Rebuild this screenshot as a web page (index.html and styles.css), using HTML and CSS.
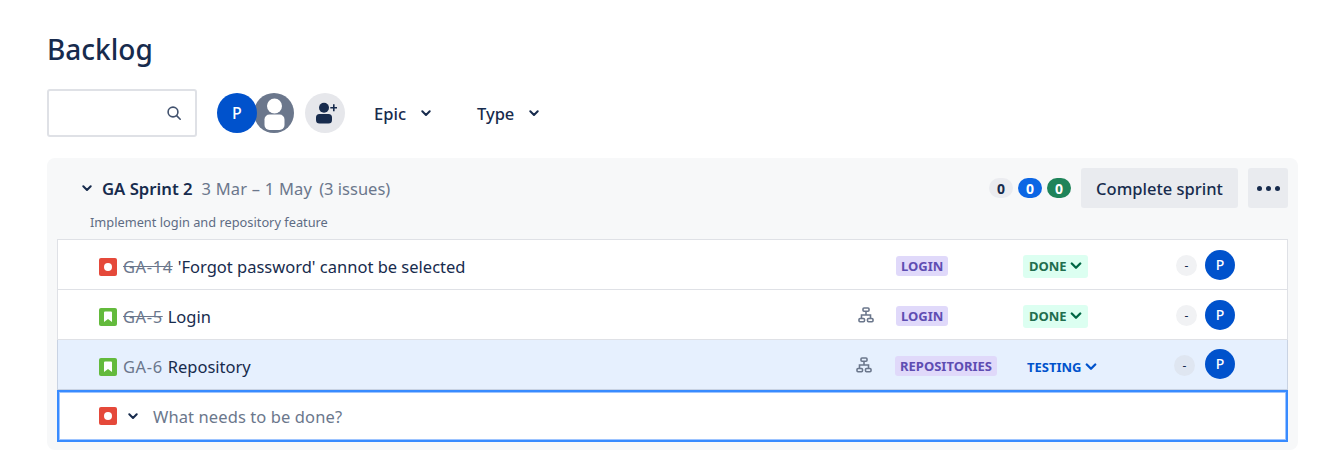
FILE: index.html
```html
<!DOCTYPE html>
<html lang="en">
<head>
    <meta charset="UTF-8">
    <meta name="viewport" content="width=device-width, initial-scale=1.0">
    <title>Backlog</title>
    <link rel="stylesheet" href="styles.css">
</head>
<body>
    <main class="page">
        <h1 class="title">Backlog</h1>
        <div class="toolbar">
            <div class="search">
                <svg class="search-icon" width="16" height="16" viewBox="0 0 16 16" fill="none" stroke="#42526e" stroke-width="1.6"><circle cx="7" cy="7" r="4.9"/><path d="M10.6 10.6 14.2 14.2" stroke-linecap="round"/></svg>
            </div>
            <div class="avatars">
                <span class="avatar avatar-lg">P</span>
                <span class="avatar-ghost">
                    <svg width="40" height="40" viewBox="0 0 40 40"><circle cx="20" cy="20" r="20" fill="#6b778c"/><circle cx="20.500" cy="13" r="7.500" fill="#fff"/><rect x="10.500" y="21.500" width="20" height="15.500" rx="5" fill="#fff"/></svg>
                </span>
            </div>
            <span class="add-people">
                <svg width="24" height="24" viewBox="0 0 24 24" fill="#172b4d"><circle cx="11" cy="6.800" r="5"/><path d="M3 16.500a3.500 3.500 0 0 1 3.500-3.500h9a3.500 3.500 0 0 1 3.500 3.500v2.500a3.500 3.500 0 0 1-3.500 3.500h-9A3.500 3.500 0 0 1 3 19z"/><path d="M20 3.300h1.600v2.700h2.400v1.600h-2.400v2.700H20V7.600h-2.700V6H20z"/></svg>
            </span>
            <button class="filter filter-epic">Epic <svg class="chev" width="10" height="7" viewBox="0 0 10 7"><path d="M1.300 1.300 5 5 8.700 1.300" fill="none" stroke="#172b4d" stroke-width="2" stroke-linecap="round" stroke-linejoin="round"/></svg></button>
            <button class="filter">Type <svg class="chev" width="10" height="7" viewBox="0 0 10 7"><path d="M1.300 1.300 5 5 8.700 1.300" fill="none" stroke="#172b4d" stroke-width="2" stroke-linecap="round" stroke-linejoin="round"/></svg></button>
        </div>

        <section class="sprint">
            <div class="sprint-head">
                <svg class="sprint-chev" width="10" height="7" viewBox="0 0 10 7"><path d="M1.300 1.300 5 5 8.700 1.300" fill="none" stroke="#172b4d" stroke-width="2" stroke-linecap="round" stroke-linejoin="round"/></svg>
                <h2 class="sprint-name">GA Sprint 2</h2>
                <span class="sprint-dates">3 Mar – 1 May</span>
                <span class="sprint-count">(3 issues)</span>
                <div class="sprint-actions">
                    <span class="count count-todo">0</span>
                    <span class="count count-progress">0</span>
                    <span class="count count-done">0</span>
                    <button class="btn btn-complete">Complete sprint</button>
                    <button class="btn btn-more" aria-label="More"><i></i><i></i><i></i></button>
                </div>
            </div>
            <p class="sprint-goal">Implement login and repository feature</p>

            <div class="issues">
                <div class="issue">
                    <svg class="type" width="18" height="18" viewBox="0 0 18 18"><rect width="18" height="18" rx="2" fill="#e5493a"/><circle cx="9" cy="9" r="4" fill="#fff"/></svg>
                    <span class="key key-done">GA-14</span>
                    <span class="summary">'Forgot password' cannot be selected</span>
                    <span class="tree"></span>
                    <span class="label-cell"><span class="label">LOGIN</span></span>
                    <span class="status-cell"><span class="status status-done">DONE <svg width="12" height="8" viewBox="0 0 10 7"><path d="M1.300 1.300 5 5 8.700 1.300" fill="none" stroke="#006644" stroke-width="2" stroke-linecap="round" stroke-linejoin="round"/></svg></span></span>
                    <span class="estimate">-</span>
                    <span class="avatar avatar-sm">P</span>
                </div>
                <div class="issue">
                    <svg class="type" width="18" height="18" viewBox="0 0 18 18"><rect width="18" height="18" rx="2" fill="#63ba3c"/><path d="M5 4.500a1 1 0 0 1 1-1h6a1 1 0 0 1 1 1v9.500l-4-3-4 3z" fill="#fff"/></svg>
                    <span class="key key-done">GA-5</span>
                    <span class="summary">Login</span>
                    <span class="tree">
                        <svg width="16" height="16" viewBox="0 0 16 16" fill="none" stroke="#6b778c" stroke-width="1.600"><rect x="5" y="1" width="6" height="3.200" rx="1"/><path d="M8 4.200V8M3.500 11.500V8h9v3.500"/><rect x="1" y="11.500" width="5.500" height="3.200" rx="1"/><rect x="9.500" y="11.500" width="5.500" height="3.200" rx="1"/></svg>
                    </span>
                    <span class="label-cell"><span class="label">LOGIN</span></span>
                    <span class="status-cell"><span class="status status-done">DONE <svg width="12" height="8" viewBox="0 0 10 7"><path d="M1.300 1.300 5 5 8.700 1.300" fill="none" stroke="#006644" stroke-width="2" stroke-linecap="round" stroke-linejoin="round"/></svg></span></span>
                    <span class="estimate">-</span>
                    <span class="avatar avatar-sm">P</span>
                </div>
                <div class="issue issue-selected">
                    <svg class="type" width="18" height="18" viewBox="0 0 18 18"><rect width="18" height="18" rx="2" fill="#63ba3c"/><path d="M5 4.500a1 1 0 0 1 1-1h6a1 1 0 0 1 1 1v9.500l-4-3-4 3z" fill="#fff"/></svg>
                    <span class="key">GA-6</span>
                    <span class="summary">Repository</span>
                    <span class="tree">
                        <svg width="16" height="16" viewBox="0 0 16 16" fill="none" stroke="#6b778c" stroke-width="1.600"><rect x="5" y="1" width="6" height="3.200" rx="1"/><path d="M8 4.200V8M3.500 11.500V8h9v3.500"/><rect x="1" y="11.500" width="5.500" height="3.200" rx="1"/><rect x="9.500" y="11.500" width="5.500" height="3.200" rx="1"/></svg>
                    </span>
                    <span class="label-cell"><span class="label">REPOSITORIES</span></span>
                    <span class="status-cell"><span class="status status-testing">TESTING <svg width="12" height="8" viewBox="0 0 10 7"><path d="M1.300 1.300 5 5 8.700 1.300" fill="none" stroke="#0052cc" stroke-width="2" stroke-linecap="round" stroke-linejoin="round"/></svg></span></span>
                    <span class="estimate">-</span>
                    <span class="avatar avatar-sm">P</span>
                </div>
                <div class="issue-create">
                    <svg class="type" width="18" height="18" viewBox="0 0 18 18"><rect width="18" height="18" rx="2" fill="#e5493a"/><circle cx="9" cy="9" r="4" fill="#fff"/></svg>
                    <svg class="create-chev" width="10" height="7" viewBox="0 0 10 7"><path d="M1.300 1.300 5 5 8.700 1.300" fill="none" stroke="#172b4d" stroke-width="2" stroke-linecap="round" stroke-linejoin="round"/></svg>
                    <span class="placeholder">What needs to be done?</span>
                </div>
            </div>
        </section>
    </main>
</body>
</html>
```

FILE: styles.css
```css
* {
    box-sizing: border-box;
}
body {
    margin: 0;
    background-color: white;
    color: #172b4d;
    font-family: "Noto Sans", sans-serif;
    font-size: 16.5px;
}
button {
    font-family: inherit;
    border: none;
    background: none;
    color: inherit;
    padding: 0;
}
.page {
    padding: 28px 34px 0 47px;
}
.title {
    margin: 0;
    height: 45px;
    font-size: 28px;
    line-height: 43px;
    font-weight: 500;
}
.toolbar {
    display: flex;
    align-items: center;
    height: 48px;
    margin-top: 16px;
}
.search {
    display: flex;
    align-items: center;
    justify-content: flex-end;
    width: 150px;
    height: 48px;
    padding-right: 13px;
    border: 2px solid #dfe1e6;
    border-radius: 3px;
}
.avatars {
    display: flex;
    margin-left: 20px;
}
.avatar {
    display: flex;
    align-items: center;
    justify-content: center;
    border-radius: 50%;
    background-color: #0052cc;
    color: white;
    font-weight: 500;
}
.avatar-lg {
    position: relative;
    z-index: 1;
    width: 40px;
    height: 40px;
    font-size: 16px;
}
.avatar-ghost {
    display: block;
    width: 40px;
    height: 40px;
    margin-left: -3px;
}
.add-people {
    display: flex;
    align-items: center;
    justify-content: center;
    width: 40px;
    height: 40px;
    margin-left: 11px;
    border-radius: 50%;
    background-color: #e6e7eb;
}
.filter {
    display: flex;
    align-items: center;
    gap: 15px;
    font-size: 16.5px;
    font-weight: 500;
    margin-left: 29px;
}
.filter-epic + .filter {
    margin-left: 46px;
}
.sprint {
    height: 292px;
    margin-top: 21px;
    padding: 10px 10px 9px;
    background-color: #f7f8f9;
    border-radius: 8px;
}
.sprint-head {
    display: flex;
    align-items: center;
    height: 40px;
    padding-left: 25px;
}
.sprint-name {
    margin: 0 0 0 10px;
    font-size: 16.7px;
    font-weight: 600;
}
.sprint-dates {
    margin-left: 9px;
    color: #6b778c;
    letter-spacing: 0.2px;
}
.sprint-count {
    margin-left: 7px;
    color: #6b778c;
}
.sprint-actions {
    display: flex;
    align-items: center;
    margin-left: auto;
}
.count {
    display: flex;
    align-items: center;
    justify-content: center;
    width: 24px;
    height: 20px;
    margin-right: 5px;
    border-radius: 10px;
    font-size: 14px;
    font-weight: 700;
    color: white;
}
.count-todo {
    background-color: #ebecf0;
    color: #172b4d;
}
.count-progress {
    background-color: #0c66e4;
}
.count-done {
    background-color: #1f845a;
    margin-right: 10px;
}
.btn {
    height: 40px;
    border-radius: 3px;
    background-color: #e9ebef;
}
.btn-complete {
    width: 157px;
    font-size: 16.5px;
    font-weight: 500;
}
.btn-more {
    display: flex;
    align-items: center;
    justify-content: center;
    gap: 4px;
    width: 40px;
    margin-left: 10px;
}
.btn-more i {
    width: 5px;
    height: 5px;
    border-radius: 50%;
    background-color: #172b4d;
}
.sprint-goal {
    margin: 5px 0 0 33px;
    height: 26px;
    line-height: 18px;
    font-size: 12.8px;
    color: #5e6c84;
}
.issues {
    background-color: white;
    border-top: 1px solid #dfe1e6;
}
.issue {
    display: flex;
    align-items: center;
    height: 50px;
    padding-left: 41px;
    border: 1px solid #dfe1e6;
    border-top: none;
}
.issue-selected {
    background-color: #e6f0fe;
    border-color: #c9d3e3;
}
.type {
    flex: none;
}
.issue .type,
.issue .key,
.issue .summary {
    margin-top: 4px;
}
.key {
    margin-left: 6px;
    color: #6b778c;
    letter-spacing: 0.6px;
}
.key-done {
    text-decoration: line-through;
}
.summary {
    flex: 1;
    margin-left: 5px;
}
.tree {
    display: flex;
    width: 38px;
}
.label-cell {
    width: 127px;
}
.issue-selected .tree {
    width: 39px;
}
.issue-selected .label-cell {
    width: 128px;
}
.label {
    display: inline-block;
    height: 20px;
    padding: 0 5px;
    border-radius: 3px;
    background-color: #e0d9fa;
    color: #5e4db2;
    font-size: 13px;
    line-height: 20px;
    font-weight: 700;
}
.status-cell {
    width: 153px;
}
.status {
    display: inline-flex;
    align-items: center;
    height: 23px;
    margin-top: 3px;
    padding: 0 6px;
    border-radius: 3px;
    font-size: 13px;
    font-weight: 700;
    white-space: pre;
}
.status-done {
    background-color: #dcfff1;
    color: #216e4e;
}
.status-testing {
    color: #0052cc;
    padding-left: 4px;
    margin-top: 5px;
}
.estimate {
    display: flex;
    align-items: center;
    justify-content: center;
    width: 21px;
    height: 21px;
    margin-top: 2px;
    border-radius: 50%;
    background-color: #f1f2f4;
    font-size: 12px;
}
.issue-selected .estimate {
    background-color: #dfe6f1;
    margin-left: -2px;
    margin-right: 2px;
}
.avatar-sm {
    width: 30px;
    height: 30px;
    margin: 0 52px 0 8px;
    font-size: 14px;
}
.issue-selected .avatar-sm {
    margin-bottom: 2px;
}
.issue-create {
    display: flex;
    align-items: center;
    height: 52px;
    padding-left: 40px;
    border: 2px solid #388bff;
    box-shadow: inset 0 0 0 1px #9dc4ff;
}
.create-chev {
    margin-left: 11px;
}
.placeholder {
    margin-left: 15px;
    color: #6b778c;
    letter-spacing: 0.1px;
}
```
